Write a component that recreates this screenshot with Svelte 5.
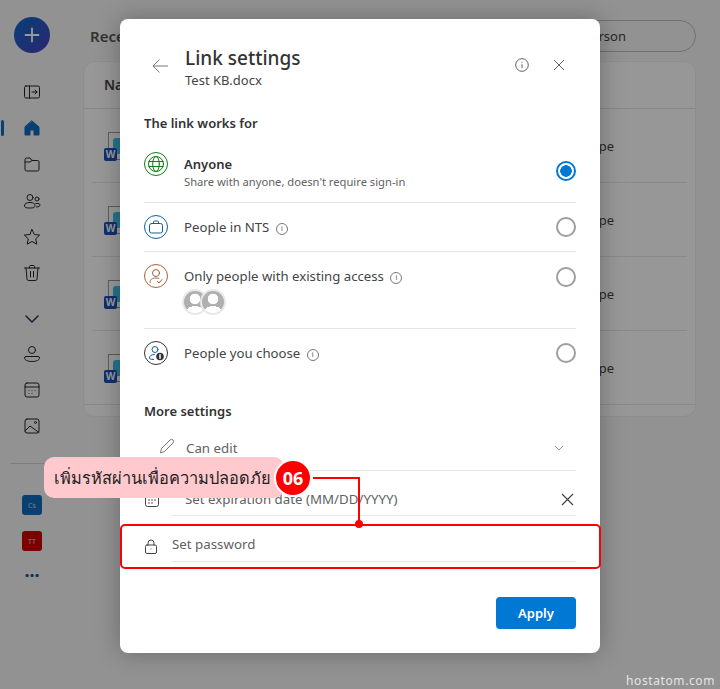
<script lang="ts">
	const rows = [0, 1, 2, 3];
</script>

<div class="page">
	<nav class="rail">
		<div class="fab">
			<svg width="16" height="16" viewBox="0 0 16 16"><path d="M8 1.500v13M1.500 8h13" stroke="#fff" stroke-width="1.800" stroke-linecap="round" /></svg>
		</div>
		<div class="rail-icons">
			<svg class="ic" viewBox="0 0 20 20"><rect x="2.500" y="4" width="15" height="12" rx="1.500" /><path d="M7.500 4v12M10 10h5M13 8l2 2-2 2" /></svg>
			<div class="active-wrap">
				<span class="active-bar"></span>
				<svg class="ic" viewBox="0 0 20 20"><path class="solid" d="M10 3l7 6v8h-5v-5H8v5H3V9z" /></svg>
			</div>
			<svg class="ic" viewBox="0 0 20 20"><path d="M3 5.500A1.500 1.500 0 0 1 4.500 4h3.500l2 2.500h5.500A1.500 1.500 0 0 1 17 8v7.500a1.500 1.500 0 0 1-1.500 1.500h-11A1.500 1.500 0 0 1 3 15.500zM3 8h5l2-1.500" /></svg>
			<svg class="ic" viewBox="0 0 20 20"><circle cx="8" cy="6.500" r="3" /><circle cx="15" cy="8" r="2" /><path d="M2.500 14.500c0-2 2-3 5.500-3s5 1 5 3-1.500 2.500-5.500 2.500-5-.5-5-2.500zM14 12.500h2c1.500 0 2 .7 2 1.500s-1 2-3.500 2" /></svg>
			<svg class="ic" viewBox="0 0 20 20"><path d="M10 2.500l2.300 5 5.400.6-4 3.700 1.100 5.400L10 14.500l-4.800 2.700 1.100-5.400-4-3.700 5.400-.6z" /></svg>
			<svg class="ic" viewBox="0 0 20 20"><path d="M2.500 5h15M7.500 5V3.500A1 1 0 0 1 8.500 2.500h3a1 1 0 0 1 1 1V5M4 5l1 11a1.500 1.500 0 0 0 1.500 1.500h7A1.500 1.500 0 0 0 15 16l1-11M8.500 8.500v5.500M11.500 8.500v5.500" /></svg>
		</div>
		<svg class="ic chev" viewBox="0 0 20 20"><path d="M4 7l6 6 6-6" /></svg>
		<div class="rail-icons lower">
			<svg class="ic" viewBox="0 0 20 20"><circle cx="10" cy="6" r="3.500" /><path d="M4 12.500h12a1.500 1.500 0 0 1 1.500 1.500c0 2-3 3.500-7.500 3.500S2.500 16 2.500 14A1.500 1.500 0 0 1 4 12.500z" /></svg>
			<svg class="ic" viewBox="0 0 20 20"><rect x="3" y="3" width="14" height="14" rx="2" /><path d="M3 7h14M7 10.500h.01M10 10.500h.01M13 10.500h.01M7 13.500h.01M10 13.500h.01" /></svg>
			<svg class="ic" viewBox="0 0 20 20"><rect x="3" y="3" width="14" height="14" rx="2" /><path d="M3 15l5-5 9 6.500" /><circle cx="13.500" cy="6.500" r="1" /></svg>
		</div>
		<hr class="rail-line" />
		<div class="tile blue">Cs</div>
		<div class="tile red">TT</div>
		<div class="more">···</div>
	</nav>

	<main class="content">
		<header class="top">
			<h2>Recent</h2>
			<div class="filter">Filter by name or person</div>
		</header>
		<section class="card">
			<div class="card-head">Name</div>
			{#each rows as r (r)}
				<div class="file-row">
					<div class="word">
						<span class="doc"></span>
						<span class="stack"></span>
						<span class="w">W</span>
					</div>
					<span class="scope">Scope</span>
				</div>
			{/each}
		</section>
	</main>

	<div class="scrim"></div>

	<div class="modal">
		<header class="m-head">
			<svg class="back" width="18" height="18" viewBox="0 0 18 18"><path d="M17 9H2M8.500 2.500L2 9l6.500 6.500" /></svg>
			<div class="titles">
				<h1>Link settings</h1>
				<p>Test KB.docx</p>
			</div>
			<svg class="head-btn" width="14" height="14" viewBox="0 0 14 14"><circle cx="7" cy="7" r="6.300" /><path d="M7 6.200v4M7 3.800v1" /></svg>
			<svg class="head-btn close" width="12" height="12" viewBox="0 0 12 12"><path d="M1 1l10 10M11 1L1 11" /></svg>
		</header>

		<h3 class="works">The link works for</h3>

		<div class="opt first">
			<span class="badge green">
				<svg width="18" height="18" viewBox="0 0 18 18"><circle cx="9" cy="9" r="7.500" /><ellipse cx="9" cy="9" rx="3.300" ry="7.500" /><path d="M2 6.500h14M2 11.500h14" /></svg>
			</span>
			<div class="opt-text">
				<strong>Anyone</strong>
				<small>Share with anyone, doesn't require sign-in</small>
			</div>
			<span class="radio on"></span>
		</div>

		<div class="opt second">
			<span class="badge navy">
				<svg width="16" height="16" viewBox="0 0 16 16"><rect x="1.500" y="4.500" width="13" height="9.500" rx="2" /><path d="M5.500 4.500V3a1 1 0 0 1 1-1h3a1 1 0 0 1 1 1v1.500" /></svg>
			</span>
			<div class="opt-text"><span class="label">People in NTS <i class="tip">i</i></span></div>
			<span class="radio"></span>
		</div>

		<div class="opt third">
			<span class="badge brown">
				<svg width="18" height="18" viewBox="0 0 18 18"><circle cx="9" cy="6" r="3.500" /><path d="M3 15.500c0-3 2-4.500 6-4.500 1 0 2 .1 2.800.4M10.500 14.500l1.500 1.500 3-3.500" /></svg>
			</span>
			<div class="opt-text">
				<span class="label">Only people with existing access <i class="tip">i</i></span>
				<div class="avatars">
					<span class="avatar"></span>
					<span class="avatar over"></span>
				</div>
			</div>
			<span class="radio"></span>
		</div>

		<div class="opt fourth">
			<span class="badge dark">
				<svg width="18" height="18" viewBox="0 0 18 18"><circle cx="8" cy="5.500" r="3" class="blue-stroke" /><path class="blue-stroke" d="M2.500 14c0-2.500 2-3.500 5-3.500M2.500 14c0 1 1 1.500 4 1.500" /><circle cx="13" cy="12.500" r="3.800" class="fill-dark" /><path d="M13 10.800v3.400" class="white" /></svg>
			</span>
			<div class="opt-text"><span class="label">People you choose <i class="tip">i</i></span></div>
			<span class="radio"></span>
		</div>

		<h3 class="more-title">More settings</h3>

		<div class="setting edit">
			<svg class="s-ic" width="16" height="16" viewBox="0 0 16 16"><path d="M1.500 14.500l1-4L11 2a1.500 1.500 0 0 1 3 3l-8.500 8.500z" /></svg>
			<div class="s-field">
				<span>Can edit</span>
				<svg class="s-chev" width="10" height="10" viewBox="0 0 10 10"><path d="M1 3l4 4 4-4" /></svg>
			</div>
		</div>
		<div class="setting date">
			<svg class="s-ic cal" width="16" height="16" viewBox="0 0 16 16"><rect x="1.500" y="1.500" width="13" height="13" rx="2" /><path d="M1.500 5h13M4.500 8h1M7.500 8h1M10.500 8h1M4.500 11h1M7.500 11h1" /></svg>
			<div class="s-field">
				<span>Set expiration date (MM/DD/YYYY)</span>
				<svg class="s-x" width="13" height="13" viewBox="0 0 13 13"><path d="M1 1l11 11M12 1L1 12" /></svg>
			</div>
		</div>
		<div class="setting pass">
			<svg class="s-ic lock" width="14" height="16" viewBox="0 0 14 16"><rect x="1.500" y="6" width="11" height="8.500" rx="1.500" /><path d="M4 6V4a3 3 0 0 1 6 0v2M7 10h.01" /></svg>
			<div class="s-field"><span>Set password</span></div>
		</div>

		<footer class="m-foot">
			<button class="apply">Apply</button>
		</footer>
	</div>

	<div class="mark-box"></div>
	<div class="mark-line"></div>
	<div class="mark-dot"></div>
	<div class="callout">
		<span class="callout-text">เพิ่มรหัสผ่านเพื่อความปลอดภัย</span>
		<span class="num">06</span>
	</div>

	<div class="brand">hostatom.com</div>
</div>

<style>
	:global(body) {
		margin: 0;
		font-family: "Noto Sans", "Open Sans", sans-serif;
	}

	.page {
		position: relative;
		width: 720px;
		height: 689px;
		overflow: hidden;
		background: #f3f3f3;
		display: flex;
		color: #242424;
	}

	/* left rail */
	.rail {
		width: 64px;
		flex: none;
		display: flex;
		flex-direction: column;
		align-items: center;
		padding-top: 17px;
		box-sizing: border-box;
	}

	.fab {
		width: 36px;
		height: 36px;
		border-radius: 50%;
		background: linear-gradient(135deg, #0a6cc4, #4a3fc0);
		display: flex;
		align-items: center;
		justify-content: center;
	}

	.rail-icons {
		display: flex;
		flex-direction: column;
		align-items: center;
		gap: 16.200px;
		margin-top: 29px;
	}

	.rail-icons.lower {
		margin-top: 15px;
	}

	.ic {
		width: 20px;
		height: 20px;
		display: block;
		fill: none;
		stroke: #242424;
		stroke-width: 1;
		stroke-linecap: round;
		stroke-linejoin: round;
	}

	.ic .solid {
		fill: #0f6cbd;
		stroke: #0f6cbd;
	}

	.chev {
		margin-top: 26px;
		stroke: #2a3f5a;
		stroke-width: 1.600;
	}

	.active-wrap {
		position: relative;
	}

	.active-bar {
		position: absolute;
		left: -21px;
		top: 2px;
		width: 3px;
		height: 16px;
		border-radius: 2px;
		background: #0f6cbd;
	}

	.rail-line {
		width: 44px;
		margin: 27px 0 0;
		border: 0;
		border-top: 1px solid #d0d0d0;
	}

	.tile {
		width: 20px;
		height: 20px;
		border-radius: 3px;
		margin-top: 16px;
		color: #d0d0d0;
		font-size: 7px;
		display: flex;
		align-items: center;
		justify-content: center;
	}

	.tile.blue {
		margin-top: 31px;
		background: #0f6cbd;
	}

	.tile.red {
		background: #d00000;
	}

	.more {
		margin-top: 12px;
		color: #0f548c;
		font-size: 18px;
		font-weight: 700;
		line-height: 24px;
	}

	/* page behind the dialog */
	.content {
		flex: 1;
		padding: 20px 24px 0 19px;
		min-width: 0;
	}

	.top {
		display: flex;
		justify-content: space-between;
		align-items: center;
		height: 32px;
		margin-bottom: 9px;
		padding-left: 7px;
	}

	.top h2 {
		margin: 0;
		font-size: 15px;
		font-weight: 600;
		color: #555;
	}

	.filter {
		width: 300px;
		box-sizing: border-box;
		height: 32px;
		border: 1px solid #bdbdbd;
		border-radius: 16px;
		padding-right: 69px;
		font-size: 13px;
		line-height: 30px;
		text-align: right;
		color: #444;
	}

	.card {
		height: 356px;
		box-sizing: border-box;
		background: #fcfcfc;
		border: 1px solid #ececec;
		border-radius: 12px;
	}

	.card-head {
		height: 46px;
		line-height: 46px;
		padding-left: 20px;
		font-size: 14px;
		font-weight: 600;
		color: #444;
		border-bottom: 1px solid #e0e0e0;
	}

	.file-row {
		height: 74px;
		box-sizing: border-box;
		margin: 0 8px;
		display: flex;
		align-items: center;
		justify-content: space-between;
		padding: 0 73px 0 12px;
		border-bottom: 1px solid #e4e4e4;
	}

	.file-row:last-child {
		margin: 0;
		padding: 0 81px 0 20px;
	}

	.scope {
		font-size: 13px;
		color: #444;
	}

	.word {
		position: relative;
		width: 30px;
		height: 30px;
		margin-top: 2px;
	}

	.doc {
		position: absolute;
		left: 4px;
		top: 0;
		width: 22px;
		height: 28px;
		border: 1px solid #9a9a9a;
		box-sizing: border-box;
		background: #fff;
	}

	.stack {
		position: absolute;
		left: 9px;
		top: 6px;
		width: 17px;
		height: 16px;
		border-radius: 3px 3px 0 0;
		background: #41c0e8;
	}

	.w {
		position: absolute;
		left: 0;
		top: 16px;
		width: 13px;
		height: 13px;
		border-radius: 2px;
		background: #1a4fc0;
		color: #fff;
		font-size: 10px;
		font-weight: 700;
		line-height: 13px;
		text-align: center;
	}

	.scrim {
		position: absolute;
		inset: 0;
		background: rgba(0, 0, 0, 0.4);
	}

	/* dialog */
	.modal {
		position: absolute;
		left: 120px;
		top: 19px;
		width: 480px;
		height: 634px;
		box-sizing: border-box;
		padding: 0 24px;
		background: #fff;
		border-radius: 8px;
		box-shadow: 0 0 24px rgba(0, 0, 0, 0.28);
	}

	.m-head {
		display: flex;
		align-items: flex-start;
		padding-top: 25px;
		height: 84px;
		box-sizing: border-box;
	}

	.back {
		fill: none;
		stroke: #777;
		stroke-width: 1;
		margin: 13px 0 0 7px;
	}

	.titles {
		flex: 1;
		margin-left: 16px;
	}

	.titles h1 {
		margin: 0;
		font-size: 19px;
		line-height: 28px;
		font-weight: 500;
		color: #333;
	}

	.titles p {
		margin: 0;
		font-size: 13px;
		line-height: 16px;
		color: #444;
	}

	.head-btn {
		fill: none;
		stroke: #616161;
		stroke-width: 1;
		margin-top: 14px;
	}

	.head-btn.close {
		margin: 15px 11px 0 24px;
	}

	.works,
	.more-title {
		margin: 0;
		font-size: 13px;
		font-weight: 600;
		line-height: 20px;
		color: #333;
	}

	.works {
		margin-top: 10px;
	}

	.opt {
		display: flex;
		align-items: flex-start;
		border-bottom: 1px solid #e6e6e6;
		box-sizing: border-box;
		position: relative;
	}

	.opt.first {
		height: 70px;
		padding-top: 19px;
	}

	.opt.first .opt-text {
		margin-top: 2px;
	}

	.opt.second {
		height: 49px;
		padding-top: 12px;
	}

	.opt.third {
		height: 77px;
		padding-top: 12px;
	}

	.opt.fourth {
		height: 50px;
		padding-top: 12px;
		border-bottom: 0;
	}

	.badge {
		width: 24px;
		height: 24px;
		flex: none;
		border-radius: 50%;
		border: 1px solid;
		box-sizing: border-box;
		display: flex;
		align-items: center;
		justify-content: center;
	}

	.badge svg {
		fill: none;
		stroke: currentColor;
		stroke-width: 1;
		stroke-linecap: round;
		stroke-linejoin: round;
	}

	.badge.green {
		color: #107c10;
	}

	.badge.navy {
		color: #0f5f9e;
	}

	.badge.brown {
		color: #a8613a;
	}

	.badge.dark {
		color: #333;
	}

	.badge .blue-stroke {
		stroke: #0f5f9e;
	}

	.badge .fill-dark {
		fill: #333;
		stroke: none;
	}

	.badge .white {
		stroke: #fff;
		stroke-width: 1.500;
	}

	.opt-text {
		flex: 1;
		margin-left: 16px;
		display: flex;
		flex-direction: column;
		min-width: 0;
	}

	.opt-text strong {
		font-size: 13px;
		font-weight: 600;
		line-height: 20px;
		color: #333;
	}

	.opt-text small {
		font-size: 11.200px;
		line-height: 15px;
		color: #616161;
	}

	.label {
		font-size: 13.200px;
		line-height: 24px;
		color: #444;
	}

	.tip {
		display: inline-block;
		width: 10px;
		height: 10px;
		margin-left: 3px;
		border: 1px solid #777;
		border-radius: 50%;
		font: 8px/10px "Liberation Sans", sans-serif;
		text-align: center;
		color: #666;
		vertical-align: 1px;
	}

	.avatars {
		display: flex;
		margin: 1px 0 0 -2px;
	}

	.avatar {
		width: 26px;
		height: 26px;
		box-sizing: border-box;
		border-radius: 50%;
		border: 2px solid #e8e8e8;
		background:
			radial-gradient(circle at 50% 36%, #fff 0 5px, transparent 5.500px),
			radial-gradient(ellipse 9px 7px at 50% 100%, #fff 0 100%, transparent 100%),
			#b0b0b0;
	}

	.avatar.over {
		margin-left: -8px;
	}

	.radio {
		width: 20px;
		height: 20px;
		box-sizing: border-box;
		border: 2px solid #9e9e9e;
		border-radius: 50%;
		flex: none;
	}

	.opt.first .radio {
		margin-top: 9px;
	}

	.opt.second .radio,
	.opt.fourth .radio {
		margin-top: 2px;
	}

	.opt.third .radio {
		margin-top: 3px;
	}

	.radio.on {
		border-color: #0078d4;
		background: radial-gradient(circle, #0078d4 0 5.500px, #fff 6px);
	}

	.more-title {
		margin-top: 22px;
	}

	.setting {
		display: flex;
		align-items: stretch;
		color: #616161;
		font-size: 13.300px;
	}

	.s-ic {
		flex: none;
		fill: none;
		stroke: #777;
		stroke-width: 1;
		stroke-linecap: round;
		stroke-linejoin: round;
	}

	.s-field {
		flex: 1;
		display: flex;
		align-items: center;
		justify-content: space-between;
		border-bottom: 1px solid #e8e8e8;
		box-sizing: border-box;
		min-width: 0;
	}

	.setting.edit {
		margin-top: 6px;
		height: 44px;
	}

	.setting.edit .s-ic {
		margin: 11px 0 0 15px;
	}

	.setting.edit .s-field {
		margin-left: 11px;
		padding-bottom: 2px;
	}

	.s-chev {
		fill: none;
		stroke: #999;
		stroke-width: 1;
		margin-right: 12px;
	}

	.setting.date {
		height: 45px;
	}

	.setting.date .s-ic {
		margin: 21px 0 0 0;
		stroke: #444;
	}

	.setting.date .s-field {
		margin-left: 12px;
		padding-top: 12px;
	}

	.setting.date span {
		margin-left: 13px;
	}

	.s-x {
		fill: none;
		stroke: #444;
		stroke-width: 1.200;
		margin-right: 2px;
	}

	.setting.pass {
		height: 46px;
	}

	.setting.pass .s-ic {
		margin: 23px 0 0 0;
		stroke: #444;
	}

	.setting.pass .s-field {
		margin-left: 14px;
		padding-top: 10px;
	}

	.m-foot {
		display: flex;
		justify-content: flex-end;
		margin-top: 35px;
	}

	.apply {
		width: 80px;
		height: 32px;
		border: 0;
		border-radius: 4px;
		background: #0078d4;
		color: #fff;
		font: 600 13px "Noto Sans", sans-serif;
	}

	/* annotation on top of the shot */
	.mark-box {
		position: absolute;
		left: 120px;
		top: 524px;
		width: 481px;
		height: 45px;
		box-sizing: border-box;
		border: 2px solid #f00;
		border-radius: 5px;
	}

	.mark-line {
		position: absolute;
		left: 313px;
		top: 477px;
		width: 47px;
		height: 47px;
		box-sizing: border-box;
		border-top: 2px solid #f00;
		border-right: 2px solid #f00;
	}

	.mark-dot {
		position: absolute;
		left: 355px;
		top: 520px;
		width: 8px;
		height: 8px;
		border-radius: 50%;
		background: #f00;
	}

	.callout {
		position: absolute;
		left: 44px;
		top: 457px;
		height: 41px;
		width: 268px;
		display: flex;
		align-items: center;
	}

	.callout::before {
		content: "";
		position: absolute;
		inset: 0 28px 0 0;
		background: #ffc9ce;
		border-radius: 10px;
	}

	.callout-text {
		position: relative;
		margin-left: 10px;
		flex: 1;
		font-size: 16.350px;
		color: #222;
		white-space: nowrap;
	}

	.num {
		position: relative;
		width: 38px;
		height: 38px;
		box-sizing: border-box;
		border: 2px solid #fff;
		border-radius: 50%;
		background: #f00;
		color: #fff;
		font-size: 18px;
		font-weight: 700;
		line-height: 34px;
		text-align: center;
		flex: none;
	}

	.brand {
		position: absolute;
		right: 5px;
		bottom: 0;
		font-size: 12px;
		letter-spacing: 0.600px;
		color: #e4e4e4;
	}
</style>
